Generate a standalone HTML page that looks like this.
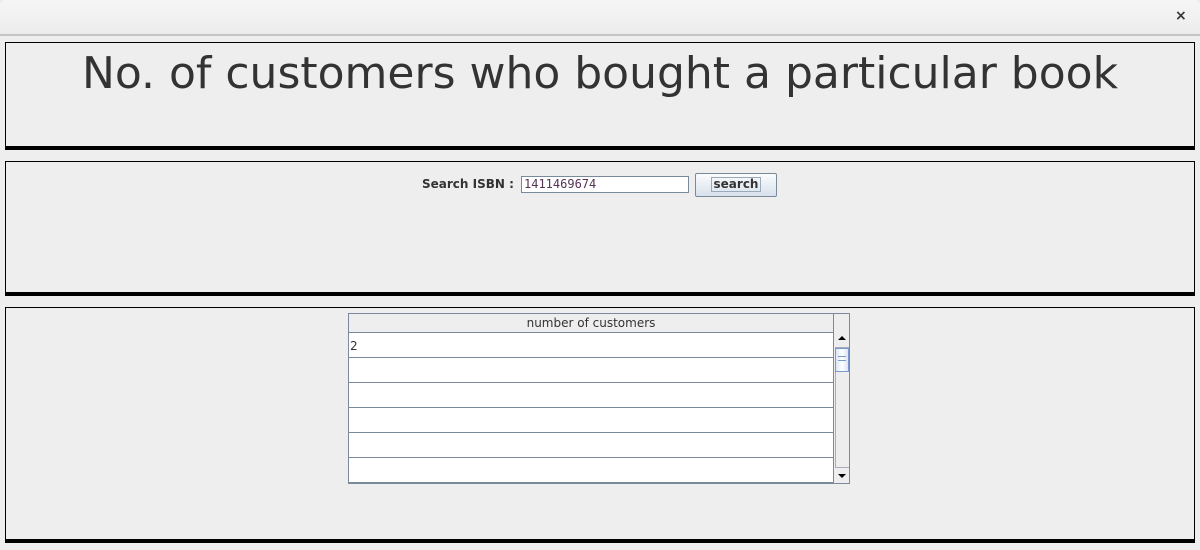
<!DOCTYPE html>
<html><head><style>
body{margin:0;width:1200px;height:550px;background:#eeeeee;font-family:"DejaVu Sans","Liberation Sans",sans-serif;position:relative;overflow:hidden}
.abs{position:absolute;box-sizing:border-box}
.panel{position:absolute;left:5px;width:1190px;border:1px solid #000;border-bottom:4px solid #000;box-sizing:border-box}
</style></head><body>
<div class="abs" style="left:0;top:0;width:1200px;height:36px;background:linear-gradient(#f6f6f6,#ececec);border-bottom:2px solid #c4c4c4;border-radius:6px 6px 0 0"></div>
<div class="abs" style="left:1175px;top:8px;font-size:14px;font-weight:bold;color:#333">×</div>
<div class="panel" style="top:42px;height:108px"></div>
<div class="abs" style="left:0;top:47px;width:1200px;text-align:center;font-size:44px;color:#333;line-height:54px">No. of customers who bought a particular book</div>
<div class="panel" style="top:161px;height:135px"></div>
<div class="abs" style="left:422px;top:177px;font-size:12px;font-weight:bold;color:#333">Search ISBN :</div>
<div class="abs" style="left:521px;top:176px;width:168px;height:17px;background:#fff;border:1px solid #7a8a9a;font-size:12px;color:#553355;padding-left:2px;line-height:15px;font-family:'DejaVu Sans Mono','Liberation Mono',monospace">1411469674</div>
<div class="abs" style="left:695px;top:173px;width:82px;height:24px;border:1px solid #7a8a9a;background:linear-gradient(#fbfcfd,#d7e1ec);border-radius:2px"></div>
<div class="abs" style="left:711px;top:177px;width:50px;height:15px;border:1px solid #9aaabb;font-size:12px;font-weight:bold;color:#333;text-align:center;line-height:13px">search</div>
<div class="panel" style="top:307px;height:236px"></div>
<div class="abs" style="left:348px;top:313px;width:502px;height:171px;border:1px solid #7a8a9a;background:#eee"></div>
<div class="abs" style="left:349px;top:314px;width:485px;height:19px;border-bottom:1px solid #7a8a9a;border-right:1px solid #7a8a9a;font-size:12px;color:#333;text-align:center;line-height:19px">number of customers</div>
<div class="abs" style="left:349px;top:333px;width:485px;height:150px;background:#fff;border-right:1px solid #7a8a9a;
background-image:repeating-linear-gradient(#fff 0,#fff 24px,#7a8a9a 24px,#7a8a9a 25px)"></div>
<div class="abs" style="left:350px;top:339px;font-size:12px;color:#333">2</div>
<div class="abs" style="left:835px;top:347px;width:14px;height:121px;border-left:1px solid #aab;border-top:1px solid #aab;border-bottom:1px solid #aab"></div>
<div class="abs" style="left:835px;top:348px;width:14px;height:24px;border:1px solid #7a9acc;background:linear-gradient(90deg,#dce6f5,#fff,#dce6f5)"></div>
<div class="abs" style="left:838px;top:356px;width:8px;height:5px;border-top:1px solid #7a9acc;border-bottom:1px solid #7a9acc"></div>
<div class="abs" style="left:838px;top:336px;width:0;height:0;border-left:4px solid transparent;border-right:4px solid transparent;border-bottom:4px solid #000"></div>
<div class="abs" style="left:838px;top:474px;width:0;height:0;border-left:4px solid transparent;border-right:4px solid transparent;border-top:4px solid #000"></div>
</body></html>
